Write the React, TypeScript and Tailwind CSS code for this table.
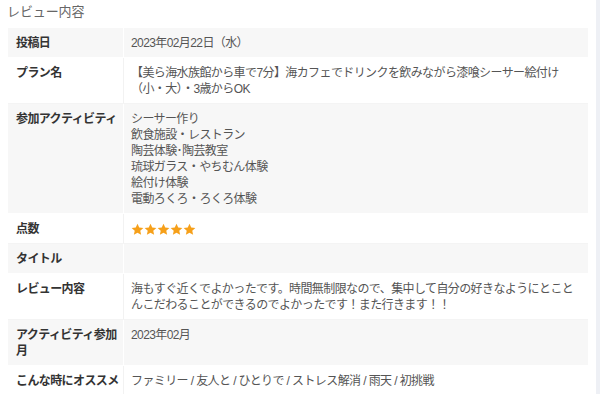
import type { ReactNode } from 'react';

// Review detail table: label column on the left, values on the right, striped rows.

type Row = { label: ReactNode; value: ReactNode };

function Stars({ count }: { count: number }) {
  return (
    <div className="flex items-center h-4">
      {Array.from({ length: count }).map((_, i) => (
        <svg key={i} width="13" height="13" viewBox="0 0 24 24">
          <path
            d="M12 1.5l3.2 7 7.6.8-5.7 5.1 1.6 7.5L12 18l-6.7 3.9 1.6-7.5L1.2 9.3l7.6-.8z"
            fill="#f6a01a"
          />
        </svg>
      ))}
    </div>
  );
}

const ROWS: Row[] = [
  { label: '投稿日', value: '2023年02月22日（水）' },
  {
    label: 'プラン名',
    value: (
      <>
        【美ら海水族館から車で7分】海カフェでドリンクを飲みながら漆喰シーサー絵付け
        <br />
        （小・大）・3歳からOK
      </>
    ),
  },
  {
    label: '参加アクティビティ',
    value: (
      <>
        <div>シーサー作り</div>
        <div>飲食施設・レストラン</div>
        <div>陶芸体験･陶芸教室</div>
        <div>琉球ガラス・やちむん体験</div>
        <div>絵付け体験</div>
        <div>電動ろくろ・ろくろ体験</div>
      </>
    ),
  },
  { label: '点数', value: <Stars count={5} /> },
  { label: 'タイトル', value: '' },
  {
    label: 'レビュー内容',
    value: (
      <>
        海もすぐ近くでよかったです。時間無制限なので、集中して自分の好きなようにとこと
        <br />
        んこだわることができるのでよかったです！また行きます！！
      </>
    ),
  },
  { label: 'アクティビティ参加月', value: '2023年02月' },
  { label: 'こんな時にオススメ', value: 'ファミリー / 友人と / ひとりで / ストレス解消 / 雨天 / 初挑戦' },
];

export default function App() {
  return (
    <div
      className="w-[600px] h-[394px] overflow-hidden flex bg-white"
      style={{ fontFamily: '"Liberation Sans", "Noto Sans CJK JP", sans-serif' }}
    >
      <div className="flex-1 px-2">
        <h2 className="h-[28px] pt-[2px] leading-5 text-[13px] tracking-[-0.1px] text-[#666] -ml-px">
          レビュー内容
        </h2>

        <div className="text-xs leading-4 tracking-[-0.6px]">
          {ROWS.map((row, i) => {
            const grey = i % 2 === 0;
            return (
              <div
                key={i}
                className={`flex border-b ${grey ? 'bg-[#f7f7f7] border-white' : 'bg-white border-[#f4f4f4]'}`}
              >
                <div
                  className={`w-[116px] shrink-0 pl-2 pr-0 pt-[7px] pb-[6px] font-bold text-[#333] border-r ${
                    grey ? 'border-white' : 'border-[#f2f2f2]'
                  }`}
                >
                  {row.label}
                </div>
                <div className="flex-1 pl-[7px] pr-[12px] pt-[7px] pb-[6px] text-[#555]">{row.value}</div>
              </div>
            );
          })}
        </div>
      </div>
      <div className="w-[4px] shrink-0 bg-[#eef0f5]" />
    </div>
  );
}
